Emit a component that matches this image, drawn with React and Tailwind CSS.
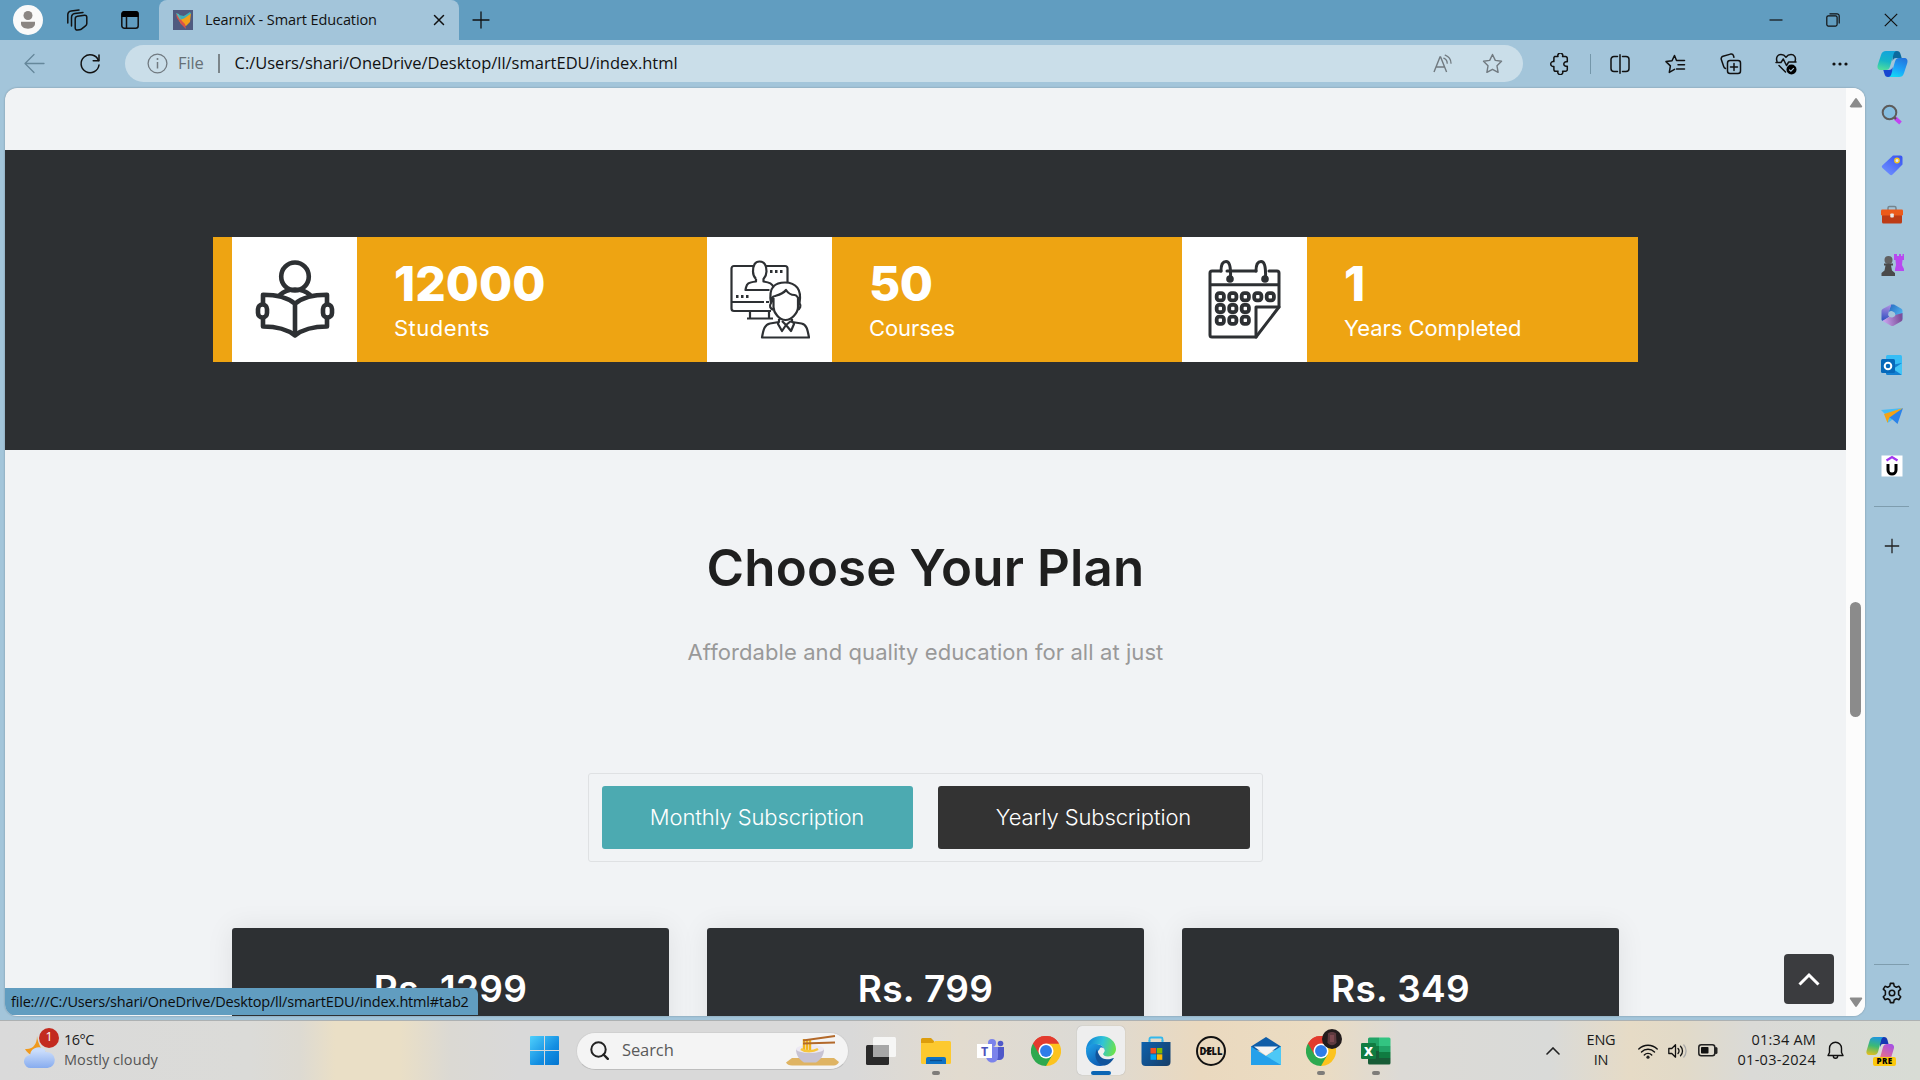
import React from "react";

const UI = "font-['Open_Sans','Noto_Sans',sans-serif]";

function Svg({ w = 24, h, vb, children, className = "" }) {
  return (
    <svg width={w} height={h || w} viewBox={vb || `0 0 ${w} ${h || w}`} fill="none" className={`block shrink-0 ${className}`}>
      {children}
    </svg>
  );
}

const line = { stroke: "#111", strokeWidth: 1.5, strokeLinecap: "round", strokeLinejoin: "round" };

/* ---------- title bar ---------- */

function TitleBar() {
  return (
    <div className="flex h-10 items-center bg-[#619dc0]">
      <div className="flex w-[159px] items-center pl-[13px]">
        <Svg w={30}>
          <circle cx="15" cy="15" r="15" fill="#fafafa" />
          <circle cx="15" cy="10.500" r="4.500" fill="#8b8683" />
          <path d="M8 16.800h14v1.700c0 3.300-3 5.200-7 5.200s-7-1.900-7-5.200z" fill="#8b8683" />
        </Svg>
        <Svg w={22} className="ml-[23px]">
          <g {...line} strokeWidth="1.500">
            <path d="M11.500 7.300l7-1.100c1.300-.2 2.300.6 2.300 1.900v6.400c0 1-.5 1.800-1.300 2.300l-3.800 3c-.6.500-1.400.8-2.200.9l-2 .3c-1.300.2-2.300-.6-2.300-1.900V10c0-1.400 1-2.500 2.300-2.700z" />
            <path d="M5.500 17V8.500a4 4 0 0 1 3.400-3.900L17 3.400" />
            <path d="M1.800 14V5.800A4 4 0 0 1 5.200 1.900L13 1" />
          </g>
        </Svg>
        <Svg w={20} className="ml-[32px]">
          <rect x="1.800" y="1.800" width="16.400" height="16.400" rx="2.500" {...line} />
          <path d="M1.500 4a3 3 0 0 1 3-3h11a3 3 0 0 1 3 3v3h-17z" fill="#000" />
          <path d="M6.500 7v11" {...line} />
        </Svg>
      </div>
      <div className="flex h-full w-[300px] items-center rounded-t-[8px] bg-[#a3c5da] pl-[14px]">
        <Svg w={20}>
          <rect width="20" height="20" fill="#4f5a80" />
          <path d="M5 8l6-2 7-3-1 9-4 4-5-2z" fill="#f2a01b" />
          <path d="M6 5l5 1 6-4 1 1.500-7 5-3 1z" fill="#3fb0b8" />
          <path d="M3 4l3 2 3 5 3 3 1 5-4-4-5-7z" fill="#d9534a" />
          <path d="M3 3l3 1 2 5-1 1z" fill="#55b8b4" />
        </Svg>
        <span className={`${UI} ml-3 w-[220px] whitespace-nowrap text-[14.500px] leading-5 tracking-[-0.1px] text-[#111]`}>
          LearniX - Smart Education
        </span>
        <Svg w={12} className="ml-2">
          <path d="M1.500 1.500l9 9M10.500 1.500l-9 9" {...line} />
        </Svg>
      </div>
      <Svg w={18} className="ml-[13px]">
        <path d="M9 1v16M1 9h16" {...line} strokeWidth="1.300" />
      </Svg>
      <div className="ml-auto flex items-center pr-[22px]">
        <Svg w={14}>
          <path d="M.5 7h13" stroke="#111" strokeWidth="1.200" />
        </Svg>
        <Svg w={14} className="ml-[43px]">
          <rect x=".8" y="2.800" width="10.300" height="10.300" rx="1.500" stroke="#111" strokeWidth="1.200" />
          <path d="M3.500 .8H11A2.200 2.200 0 0 1 13.200 3v7.500" stroke="#111" strokeWidth="1.200" />
        </Svg>
        <Svg w={14} className="ml-[44px]">
          <path d="M.8.8l12.400 12.400M13.200.8L.8 13.200" stroke="#111" strokeWidth="1.200" />
        </Svg>
      </div>
    </div>
  );
}

/* ---------- address bar ---------- */

function Toolbar() {
  return (
    <div className="flex h-12 items-center pb-px">
      <Svg w={21} className="ml-[24px]">
        <path d="M20 10.500H1.500M10 1.500l-9 9 9 9" stroke="#65889b" strokeWidth="1.300" strokeLinejoin="round" strokeLinecap="round" />
      </Svg>
      <Svg w={22} className="ml-[34px]">
        <path d="M19.500 7.500A9 9 0 1 0 20 12" {...line} />
        <path d="M20 2v5.800h-5.800" {...line} />
      </Svg>
      <div className="ml-[24px] flex h-[37px] w-[1398px] items-center rounded-full bg-[#cadee9] pl-[22px]">
        <Svg w={21}>
          <circle cx="10.500" cy="10.500" r="9.400" stroke="#717a80" strokeWidth="1.300" />
          <path d="M10.500 9v6.500" stroke="#717a80" strokeWidth="1.500" />
          <circle cx="10.500" cy="6" r="1" fill="#717a80" />
        </Svg>
        <span className={`${UI} ml-[10px] w-[40px] text-[16.500px] tracking-[-0.1px] text-[#667076]`}>File</span>
        <span className="h-[19px] w-[1.500px] bg-[#7b858a]" />
        <span className={`${UI} ml-[15px] whitespace-nowrap text-[16.500px] tracking-[-0.010px] text-[#111]`}>
          C:/Users/shari/OneDrive/Desktop/ll/smartEDU/index.html
        </span>
        <div className="ml-auto flex items-center pr-[20px]">
          <Svg w={20}>
            <path d="M1 18L7 3h.6l6 15M3 13h8.600" stroke="#717a80" strokeWidth="1.400" />
            <path d="M10.800 4.200a5.500 5.500 0 0 1 3.400 5M12.200 1.200a9 9 0 0 1 5.800 8" stroke="#717a80" strokeWidth="1.300" strokeLinecap="round" />
          </Svg>
          <Svg w={21} className="ml-[29px]">
            <path d="M10.500 1.500l2.800 5.900 6.200.9-4.500 4.500 1.100 6.500-5.600-3-5.600 3L6 12.800 1.500 8.300l6.200-.9z" stroke="#717a80" strokeWidth="1.400" strokeLinejoin="round" />
          </Svg>
        </div>
      </div>
      <div className="flex items-center">
        <Svg w={22} className="ml-[26px]">
          <path d="M5 4h3.500a2.500 2.500 0 1 1 4.600 0H16a1.800 1.800 0 0 1 1.800 1.800v3.400h-1.300a2.200 2.200 0 1 0 0 4.400h1.300v3.200A1.800 1.800 0 0 1 16 18.600h-2.900a2.500 2.500 0 1 1-4.600 0H6.200a1.800 1.800 0 0 1-1.800-1.800v-3a2.500 2.500 0 1 1 0-4.800V5z" {...line} transform="translate(.5 -.4)" />
        </Svg>
        <span className="ml-[19px] h-5 w-px bg-[#7497aa]" />
        <Svg w={20} className="ml-[19px]">
          <path d="M7.500 2.500H4a3 3 0 0 0-3 3v9a3 3 0 0 0 3 3h3.500M12.500 2.500H16a3 3 0 0 1 3 3v9a3 3 0 0 1-3 3h-3.500M10 .8v18.400" {...line} />
        </Svg>
        <Svg w={21} h={20} className="ml-[35px]">
          <path d="M11.500 6.500L9.500 1.500 7 6.800 1 7.600l4.400 4.300-1.100 6.500 5.200-3M11.500 6.500h8M13 10.800h6.500M11.500 15h8" {...line} />
        </Svg>
        <Svg w={22} className="ml-[34px]">
          <rect x="7.500" y="7.500" width="13" height="13" rx="2.500" {...line} />
          <path d="M14 10.500v7M10.500 14h7M5.500 15.500C4.500 15 4 14.500 3.700 13.500L1.300 6.500A2.500 2.500 0 0 1 3 3.300l7.500-2.200a2.500 2.500 0 0 1 3 1.700l.4 1.400" {...line} />
        </Svg>
        <Svg w={22} className="ml-[33px]">
          <path d="M2 8.500C.5 4 3 1.500 6 1.500c2.200 0 3.800 1 5 2.700 1.200-1.700 2.800-2.700 5-2.700 3 0 5.500 2.500 4 7M1 9.500h5l2.300-3.500 3.200 6.500 2.200-3.500H21M4 12.500l6.500 6.500" {...line} />
          <circle cx="16.500" cy="16.500" r="5" fill="#000" />
          <path d="M14.200 16.600l1.700 1.600 2.900-3" stroke="#a3c5da" strokeWidth="1.200" />
        </Svg>
        <Svg w={18} h={6} className="ml-[34px]">
          <circle cx="3" cy="3" r="1.600" fill="#111" />
          <circle cx="9" cy="3" r="1.600" fill="#111" />
          <circle cx="15" cy="3" r="1.600" fill="#111" />
        </Svg>
      </div>
      <Svg w={31} h={28} className="ml-[28px]">
        <Copilot />
      </Svg>
    </div>
  );
}

function Copilot() {
  return (
    <>
      <defs>
        <linearGradient id="cpA" x1="8" y1="1" x2="4" y2="20" gradientUnits="userSpaceOnUse">
          <stop stopColor="#12a5da" /><stop offset=".5" stopColor="#16b5c8" /><stop offset="1" stopColor="#52e09a" />
        </linearGradient>
        <linearGradient id="cpB" x1="26" y1="8" x2="18" y2="27" gradientUnits="userSpaceOnUse">
          <stop stopColor="#2274dc" /><stop offset=".6" stopColor="#1ba5fa" /><stop offset="1" stopColor="#13d7f4" />
        </linearGradient>
      </defs>
      <path d="M15 1h5c2 0 3 1 3.500 3l1.200 4h-5.500c-2 0-3 1-3.500 3z" fill="#0b6a9e" />
      <path d="M16 27h-5c-2 0-3-1-3.500-3l-1.200-4H12c2 0 3-1 3.500-3z" fill="#1746d0" />
      <path d="M9 1h11c-2 0-3 1.500-3.500 3.500l-3.500 12C12.300 19 11 20 9 20H4c-3 0-4-2-3.300-5L4 5C5 2 6.500 1 9 1z" fill="url(#cpA)" />
      <path d="M22 27H11c2 0 3-1.500 3.500-3.500l3.500-12C18.700 9 20 8 22 8h5c3 0 4 2 3.300 5L27 23c-1 3-2.500 4-5 4z" fill="url(#cpB)" />
    </>
  );
}

/* ---------- side rail ---------- */

function SideRail() {
  return (
    <div className="flex w-[55px] flex-col items-center pr-[2px] pt-[16px]">
      <div className="flex flex-col items-center gap-[28.100px]">
        <Svg w={22}>
          <path d="M14 14l5.500 5" stroke="#c243f2" strokeWidth="3.800" />
          <path d="M12 12l3 3" stroke="#5b4a50" strokeWidth="2" />
          <circle cx="8.500" cy="8.500" r="6.800" fill="#86bee0" stroke="#5d5b5a" strokeWidth="2" />
        </Svg>
        <Svg w={22}>
          <defs><linearGradient id="tag" x1="18" y1="2" x2="5" y2="20" gradientUnits="userSpaceOnUse"><stop stopColor="#3b57f2" /><stop offset="1" stopColor="#6c8dff" /></linearGradient></defs>
          <path d="M12 1.500h7.500a2 2 0 0 1 2 2v7L11.500 20.500c-1 1-1.800 1-2.800 0L1.500 14c-1-1-1-1.800 0-2.800z" fill="url(#tag)" />
          <circle cx="16" cy="6.500" r="2.200" fill="#dbe5ff" stroke="#f6c51b" strokeWidth="1.400" />
        </Svg>
        <Svg w={24} h={22}>
          <path d="M8 6V4a1.500 1.500 0 0 1 1.500-1.500h5A1.500 1.500 0 0 1 16 4v2" stroke="#74858e" strokeWidth="1.500" />
          <rect x="2" y="10" width="20" height="9.500" rx="1.500" fill="#bd3c16" />
          <rect x="1" y="5.500" width="22" height="6" rx="1.200" fill="#ec5a1a" />
          <rect x="10.300" y="9.500" width="3.500" height="4" rx=".8" fill="#e9e9e9" />
        </Svg>
        <Svg w={24} h={22}>
          <path d="M15 0h2v2h2V0h2v2h1.500V0H24v6h-1.500l-.5 5 2 4v2h-9v-2l1-4-.5-5H14V0z" fill="#b848f0" />
          <circle cx="8.500" cy="6" r="4" fill="#616161" />
          <path d="M4 9.500h9v2h-2l1 5 3 2.500v3H1.500v-3l3-2.500 1-5H4z" fill="#4a4a4a" />
        </Svg>
        <Svg w={22}>
          <defs>
            <linearGradient id="m1" x1="8" y1="3" x2="21" y2="12" gradientUnits="userSpaceOnUse"><stop stopColor="#2c6fc4" /><stop offset="1" stopColor="#50b9f2" /></linearGradient>
            <linearGradient id="m2" x1="4" y1="1" x2="2" y2="15" gradientUnits="userSpaceOnUse"><stop stopColor="#a98be0" /><stop offset="1" stopColor="#3a55c4" /></linearGradient>
            <linearGradient id="m3" x1="3" y1="19" x2="20" y2="16" gradientUnits="userSpaceOnUse"><stop stopColor="#c9a3ee" /><stop offset="1" stopColor="#7d4f9c" /></linearGradient>
          </defs>
          <path fillRule="evenodd" d="M10 .5h3l7 4c1 .6 1.500 1.300 1.500 2.500V15l-7-4a4 4 0 0 0-7-2.500z" fill="url(#m1)" />
          <path d="M10.500.3L2 4.800C1 5.400.5 6 .5 7.200V15c0 1 .3 1.500 1 2l6.700-4.200A4 4 0 0 1 7.500 8.500z" fill="url(#m2)" />
          <path d="M1.500 17l7-4.200a4 4 0 0 0 6-1.800l7-2v6c0 1.200-.5 1.800-1.500 2.400l-7 4c-1.200.7-2.200.7-3.400 0z" fill="url(#m3)" />
        </Svg>
        <Svg w={22}>
          <rect x="5" y="1" width="16" height="13" rx="1.500" fill="#36bdf6" />
          <path d="M5 12l16-3v10.500a1.500 1.500 0 0 1-1.500 1.500h-13A1.500 1.500 0 0 1 5 19.500z" fill="#127fd1" />
          <path d="M21 9v12l-9-6z" fill="#42c5f7" />
          <rect x="0" y="5" width="14" height="14" rx="1.500" fill="#0669ba" />
          <circle cx="7" cy="12" r="3.300" stroke="#fff" strokeWidth="2" />
        </Svg>
        <Svg w={22}>
          <path d="M0 5l22-2-12 4.500-6 1.500z" fill="#47bcf5" />
          <path d="M22 3L7 12l1.500 3.500 3-1 5 4.500z" fill="#2b83e9" />
          <path d="M22 3L3 9l3.500 9 2-5.500z" fill="#f5a313" />
          <path d="M6.500 18l2-5.500 3 2z" fill="#49bdf0" />
        </Svg>
        <Svg w={22}>
          <rect x=".5" y=".5" width="21" height="21" fill="#fff" />
          <path d="M5.500 5.500L11 2l5.500 3.500" stroke="#a336f0" strokeWidth="2.300" />
          <path d="M7 9v6a4 4 0 0 0 8 0V9" stroke="#000" strokeWidth="3" />
        </Svg>
      </div>
      <span className="mt-[29px] h-px w-[35px] bg-[#7e9dae]" />
      <Svg w={16} className="mt-[31px]">
        <path d="M8 .8v14.400M.8 8h14.400" stroke="#222" strokeWidth="1.300" />
      </Svg>
      <span className="mt-auto h-px w-[35px] bg-[#7e9dae]" />
      <Svg w={22} vb="0 0 24 24" className="mb-[12px] mt-[17px]">
        <path d="M10.200 1.500h3.600l.6 3 2.300 1.200 2.900-1 1.900 3.100-2.300 2.200v3.900l2.300 2.200-1.900 3.200-2.900-1-2.300 1.300-.6 2.900h-3.600l-.6-2.900-2.300-1.300-2.900 1-1.900-3.200 2.300-2.200V10L2.500 7.800l1.900-3.100 2.900 1 2.300-1.200z" {...line} strokeWidth="1.700" />
        <circle cx="12" cy="12" r="3" {...line} strokeWidth="1.700" />
      </Svg>
    </div>
  );
}

/* ---------- page ---------- */

function ReaderIcon() {
  return (
    <Svg w={80}>
      <g stroke="#2d3033" strokeWidth="4.600" strokeLinejoin="round" strokeLinecap="round">
        <ellipse cx="40" cy="16.500" rx="13.800" ry="14" />
        <path d="M25 35c4-4 8-5.500 15-5.500S51 31 55 35" />
        <path d="M8 43v-8.200c12 0 24 2.200 32 9 8-6.800 20-9 32-9V43M8 59v7.500c12 0 24 2.500 32 9 8-6.500 20-9 32-9V59M40 44v31" />
        <rect x="3" y="44.500" width="9" height="13" rx="4.500" />
        <rect x="68" y="44.500" width="9" height="13" rx="4.500" />
      </g>
    </Svg>
  );
}

function TutorIcon() {
  return (
    <Svg w={80}>
      <g stroke="#2d3033" strokeWidth="2.200" strokeLinejoin="round">
        <path d="M23 6H4a2.500 2.500 0 0 0-2.500 2.500v40A2.500 2.500 0 0 0 4 51h37M36 6h19a2.500 2.500 0 0 1 2.500 2.500V22M2 42h32M36 42h3" />
        <path d="M20 51v7M39 51v7M17 58.500h26" />
        <path d="M26 19c-2-2-3-4-3-7.500C23 5 25 1.500 29.500 1.500S36.500 5 36.500 11.500c0 3.500-1.300 5.500-3 7.500v2.500c6 1 9 2 10 6M26 19v2.500c-8 1-9 2-10 6L15.500 30h24" />
        <path d="M41 43c-3-17 5-20.500 14-20.500 11 0 17 7 14.500 20.500-1-5-2-8-5-8-4 0-6.500-2-8.500-5-3 4-7.500 5-11 6-3 0-3.500 3-4 7zM43.500 38v9c0 6 6 13 12 13S68 53 68 47V37M41 43c-2 3-1 6 3 7M69.500 43c2 3 .5 6-2 7" />
        <path d="M49 59v3l-9 1.500c-5 1-6.500 5-8 14h47C77.500 69 76.500 64.500 71.500 63.500L62 62v-3M49 61l-1 3 4 7 4-6 5 6 3-7-2-3M56 65l-4-4M56 65l5-4" />
      </g>
      <g fill="#2d3033">
        <path d="M40 10h2.500v3H40zM45 10h2.500v3H45zM50 10h2.500v3H50zM6 35h2.500v3H6zM11 35h2.500v3H11zM16 35h2.500v3H16z" />
      </g>
    </Svg>
  );
}

const days = [[0, 0], [1, 0], [2, 0], [3, 0], [4, 0], [0, 1], [1, 1], [2, 1], [0, 2], [1, 2], [2, 2]];

function CalendarIcon() {
  return (
    <Svg w={80}>
      <g stroke="#2d3033" strokeWidth="3" strokeLinejoin="round" strokeLinecap="round">
        <path d="M16 11H7a2 2 0 0 0-2 2v62a2 2 0 0 0 2 2h44l23-30V13a2 2 0 0 0-2-2h-8M22 11h29M28 11h16M5 24.800h69" />
        <path d="M51 77V47h23" />
        <path d="M16 11C16 4 18 1.500 21 1.500S26 5 25.500 18M51 11c0-7 2-9.500 5-9.500s5 3.500 4.500 16.500" />
        {days.map(([c, r]) => (
          <rect key={`${c}-${r}`} x={11.700 + c * 12.500} y={33.200 + r * 11.700} width="7.200" height="7.200" rx="2.600" strokeWidth="3.800" />
        ))}
      </g>
      <circle cx="25" cy="19" r="3.800" fill="#2d3033" />
      <circle cx="60" cy="19" r="3.800" fill="#2d3033" />
    </Svg>
  );
}

const stats = [
  { icon: <ReaderIcon />, value: "12000", label: "Students", vt: "tracking-[0px]", lt: "tracking-[0.5px]" },
  { icon: <TutorIcon />, value: "50", label: "Courses", vt: "tracking-[-0.6px]", lt: "tracking-[-0.1px]" },
  { icon: <CalendarIcon />, value: "1", label: "Years Completed", vt: "", lt: "tracking-[-0.050px]" },
];

function Stats() {
  return (
    <section className="flex h-[300px] items-center justify-center bg-[#2d3033] pb-[1px]">
      <div className="flex w-[1425px] bg-[#eea412] pl-[19px]">
        {stats.map((s) => (
          <div key={s.label} className="flex h-[125px] w-[475px] shrink-0 items-center last:w-[456px]">
            <div className="flex h-full w-[125px] items-center justify-center bg-white">{s.icon}</div>
            <div className="ml-[37px] pt-[2px] text-white">
              <div className={`text-[48px] font-extrabold leading-[52px] ${s.vt}`}>{s.value}</div>
              <div className={`mt-[3px] whitespace-nowrap text-[22px] leading-[30px] ${s.lt}`}>{s.label}</div>
            </div>
          </div>
        ))}
      </div>
    </section>
  );
}

function Plans() {
  return (
    <section className="flex flex-col items-center">
      <h2 className="mt-[86px] whitespace-nowrap text-[51px] font-semibold leading-[64px] tracking-[0.150px] text-[#1f1f1f]">
        Choose Your Plan
      </h2>
      <p className="mt-[37px] whitespace-nowrap text-[22px] leading-[30px] tracking-[0.080px] text-[#999999]">
        Affordable and quality education for all at just
      </p>
      <div className="mt-[106px] flex h-[89px] w-[675px] items-center justify-between rounded-[3px] border border-[#dfe1e3] px-[12.500px]">
        <div className="flex h-[63px] w-[311px] items-center justify-center whitespace-nowrap rounded-[3px] bg-[#4caab1] text-[22px] font-light tracking-[-0.130px] text-white">
          Monthly Subscription
        </div>
        <div className="flex h-[63px] w-[312px] items-center justify-center whitespace-nowrap rounded-[3px] bg-[#333333] text-[22px] font-light tracking-[-0.130px] text-white">
          Yearly Subscription
        </div>
      </div>
      <div className="mt-[66px] flex gap-[38px]">
        {["Rs. 1299", "Rs. 799", "Rs. 349"].map((p) => (
          <div key={p} className="flex h-[120px] w-[437px] justify-center rounded-[3px] bg-[#2d3033] pt-[37px] shadow-[0_0_28px_rgba(0,0,0,0.08)]">
            <span className="whitespace-nowrap text-[37px] font-semibold leading-[48px] tracking-[0.350px] text-white">{p}</span>
          </div>
        ))}
      </div>
    </section>
  );
}

function Viewport() {
  return (
    <div className="relative ml-[5px] flex w-[1860px] overflow-hidden rounded-[12px] bg-[#f1f3f5] shadow-[0_0_2px_rgba(0,0,0,0.3)]">
      <main className="h-full w-[1841px] overflow-hidden pt-[62px] font-[Inter,sans-serif]">
        <Stats />
        <Plans />
      </main>
      <div className="flex w-[19px] flex-col items-center bg-[#fcfcfc] pt-[10px]">
        <Svg w={14} h={10}>
          <path d="M6 .8a1.200 1.200 0 0 1 2 0l5 7.200c.5.700 0 1.500-.8 1.500H1.800C1 9.500.5 8.700 1 8z" fill="#8b8b8b" />
        </Svg>
        <span className="mt-[494px] h-[115px] w-[11px] rounded-full bg-[#8b8b8b]" />
        <Svg w={14} h={10} className="mb-[9px] mt-auto rotate-180">
          <path d="M6 .8a1.200 1.200 0 0 1 2 0l5 7.200c.5.700 0 1.500-.8 1.500H1.800C1 9.500.5 8.700 1 8z" fill="#8b8b8b" />
        </Svg>
      </div>
      <div className="absolute bottom-[12px] right-[31px] flex h-[50px] w-[50px] items-center justify-center rounded-[4px] bg-[#3b3c3f]">
        <Svg w={22} h={14}>
          <path d="M1.500 12.500L11 3 20.500 12.500" stroke="#fff" strokeWidth="3" />
        </Svg>
      </div>
      <div className={`${UI} absolute bottom-px left-0 flex h-[27px] w-[473px] items-center whitespace-nowrap rounded-tr-[6px] bg-[#619dc0] pl-[6px] text-[14.500px] tracking-[-0.180px] text-[#0c0c0c]`}>
        file:///C:/Users/shari/OneDrive/Desktop/ll/smartEDU/index.html#tab2
      </div>
    </div>
  );
}

/* ---------- taskbar ---------- */

function Chrome() {
  return (
    <Svg w={30} vb="0 0 48 48">
      <path d="M24 24L3.200 12A24 24 0 0 1 44.800 12z" fill="#e33b2e" />
      <path d="M24 24V12h20.800A24 24 0 0 1 24 48z" fill="#fcc31e" />
      <path d="M24 24l10.400 6L24 48A24 24 0 0 1 3.200 12z" fill="#2da94f" />
      <path d="M24 12h20.800A24 24 0 0 0 3.200 12l10.400 18z" fill="#e33b2e" />
      <circle cx="24" cy="24" r="12" fill="#fff" />
      <circle cx="24" cy="24" r="9.500" fill="#2f7de9" />
    </Svg>
  );
}

function Edge() {
  return (
    <Svg w={30}>
      <defs>
        <linearGradient id="eg" x1="2" y1="6" x2="29" y2="14" gradientUnits="userSpaceOnUse">
          <stop stopColor="#1488d8" /><stop offset=".5" stopColor="#2fc3d8" /><stop offset="1" stopColor="#6be24c" />
        </linearGradient>
        <linearGradient id="eb" x1="0" y1="10" x2="14" y2="30" gradientUnits="userSpaceOnUse">
          <stop stopColor="#1fa0e6" /><stop offset="1" stopColor="#0c59b0" />
        </linearGradient>
      </defs>
      <path d="M0 13C1 5 7 0 15 0c9 0 15 6 15 13 0 4.500-3.500 7.500-8 7.500-3.500 0-5-1.500-5-2.500s1.500-1.500 1.500-4c0-3-3-5.500-7-5.500C6 8.500 1 11 0 15z" fill="url(#eg)" />
      <path d="M0 15C0 10 5 7.500 10 8c5 .4 8.500 3 8.500 6-6-2.500-8 2-6.500 6 1.500 5 6 8 11 6-3 3-6 4-9 4C6 30 0 23 0 15z" fill="url(#eb)" />
      <path d="M11 13c-4 7 0 16 8 16.500 4-1 7-4 9-7.500-1-.5-3 1.300-7 1.300-6 0-9-5-10-10.300z" fill="#11549b" />
      <path d="M14 12c2.500-1 4.500 0 4.500 2.500 0 2-1.500 2.500-1.500 3.500s1 2 3 2.300c-5 1-8-5-6-8.300z" fill="#f0f0f0" />
    </Svg>
  );
}

function AppSlot({ children, active, running }) {
  return (
    <div className="flex w-[55px] justify-center">
      <div className={`relative flex h-[49px] w-[48px] items-center justify-center rounded-[5px] ${active ? "bg-[#eeeeee] shadow-[0_0_1px_rgba(0,0,0,0.3)]" : ""}`}>
        {children}
        {active && <span className="absolute bottom-0 h-[4px] w-[20px] rounded-full bg-[#0b66b4]" />}
        {running && <span className="absolute bottom-0 h-[4px] w-[8px] rounded-full bg-[#7e7c79]" />}
      </div>
    </div>
  );
}

function Taskbar() {
  return (
    <div className={`${UI} flex h-[60px] items-center border-t border-[#adb1b2] bg-[linear-gradient(90deg,#dadada_0px,#dbdbd8_250px,#dddad2_300px,#eadfc6_335px,#eadfc6_400px,#dbd9d3_450px,#d9d9d9_520px,#d9d9d9_850px,#e2dbcf_960px,#dcdad5_1080px,#ead9bf_1200px,#ebdcc2_1320px,#dcdad6_1400px,#d9dad8_1550px,#e6dbc6_1630px,#e2dac8_1680px,#dadad7_1750px,#d8dcd5_1920px)] text-[#1b1b1b]`}>
      <div className="flex w-[530px] items-center pl-[24px]">
        <div className="relative">
          <Svg w={34} h={36}>
            <defs><linearGradient id="cl" x1="0" y1="18" x2="0" y2="36" gradientUnits="userSpaceOnUse"><stop stopColor="#c9dcfb" /><stop offset="1" stopColor="#83a9ee" /></linearGradient></defs>
            <path d="M13 3c1 8 4 14 11 17-5 7-19 4-23-4C9 17 13 11 13 3z" fill="#f09a1e" />
            <path d="M7 35a6.500 6.500 0 0 1-1-13A8.500 8.500 0 0 1 22 19a7.500 7.500 0 0 1 1.500 16z" fill="url(#cl)" />
          </Svg>
          <span className="absolute -top-[5px] left-[15px] flex h-5 w-5 items-center justify-center rounded-full bg-[#c32a1f] text-[12.500px] leading-none text-white">1</span>
        </div>
        <div className="ml-[6px] whitespace-nowrap pb-[2px] text-[14.500px] leading-[20px] tracking-[-0.500px]">
          <div>16°C</div>
          <div className="tracking-[0.080px] text-[#555]">Mostly cloudy</div>
        </div>
      </div>
      <Svg w={29}>
        <defs><linearGradient id="wn" x1="0" y1="0" x2="29" y2="29" gradientUnits="userSpaceOnUse"><stop stopColor="#4fd0fc" /><stop offset=".6" stopColor="#138ee2" /><stop offset="1" stopColor="#0475d0" /></linearGradient></defs>
        <path d="M0 1a1 1 0 0 1 1-1h13v14H0zM15 0h13a1 1 0 0 1 1 1v13H15zM0 15h14v14H1a1 1 0 0 1-1-1zM15 15h14v13a1 1 0 0 1-1 1H15z" fill="url(#wn)" />
      </Svg>
      <div className="ml-[17px] mr-[4px] flex h-[38px] w-[273px] items-center rounded-full border border-[#d0d0d0] border-b-[#bdbdbd] bg-[#f4f4f4] pl-[13px]">
        <Svg w={19}>
          <circle cx="8.500" cy="8.500" r="7.200" stroke="#222" strokeWidth="2" />
          <path d="M13.500 13.500l4.300 4.300" stroke="#222" strokeWidth="2.400" strokeLinecap="round" />
        </Svg>
        <span className="ml-[13px] text-[16.500px] tracking-[-0.100px] text-[#5a5a5a]">Search</span>
        <Svg w={54} h={32} className="ml-auto mr-[8px]">
          <path d="M6 23h42l5 4c-1 2-3 3.500-5 3.500H6c-3 0-5-1-6-3z" fill="#dfb463" />
          <path d="M10 14h28c0 7-4 11-8 13.500H18C14 25 10 21 10 14z" fill="#c7c3d3" />
          <ellipse cx="24" cy="14" rx="14" ry="4" fill="#ece9f3" />
          <path d="M18 4v11M21 4v12M24 4v11" stroke="#f3b61c" strokeWidth="2.400" />
          <path d="M15 14c4 3 12 3 17 0" stroke="#f6c63d" strokeWidth="2.500" />
          <path d="M17 5.500L49 1M17 8.500l32-1" stroke="#b3692a" strokeWidth="1.800" />
        </Svg>
      </div>
      <div className="flex">
        <AppSlot>
          <Svg w={30} h={30}>
            <rect x="0" y="9" width="23" height="20" rx="1.500" fill="#2a2a2a" />
            <rect x="7" y="1" width="23" height="20" rx="1.500" fill="#fafafa" opacity=".85" />
            <rect x="7" y="9" width="16" height="12" fill="#a7a7a7" />
          </Svg>
        </AppSlot>
        <AppSlot running>
          <Svg w={30} h={28}>
            <path d="M0 2.500A1.500 1.500 0 0 1 1.500 1H10l3 3v6H0z" fill="#dd9d0c" />
            <path d="M0 6h12l2-2h14.500A1.500 1.500 0 0 1 30 5.500v20a1.500 1.500 0 0 1-1.500 1.500h-27A1.500 1.500 0 0 1 0 25.500z" fill="#fdc92f" />
            <path d="M5 27v-5a2 2 0 0 1 2-2h16a2 2 0 0 1 2 2v5z" fill="#0f72c5" />
            <path d="M9 23.500h12" stroke="#0a4b8c" strokeWidth="1.300" />
          </Svg>
        </AppSlot>
        <AppSlot>
          <Svg w={28} h={26}>
            <circle cx="15" cy="5" r="4" fill="#7b83eb" />
            <circle cx="23.500" cy="5.500" r="2.800" fill="#5059c9" />
            <path d="M18 9h9v8c0 4-3 5.500-6 5H18z" fill="#5059c9" />
            <path d="M9 9h12v9c0 5-3 6.500-6 6.500S9 22 9 18z" fill="#7b83eb" />
            <rect x="0" y="6" width="15" height="14" fill="#fff" />
            <text x="7.500" y="17.500" fontSize="12.500" fontWeight="700" fill="#4b53bc" textAnchor="middle">T</text>
          </Svg>
        </AppSlot>
        <AppSlot><Chrome /></AppSlot>
        <AppSlot active><Edge /></AppSlot>
        <AppSlot>
          <Svg w={30}>
            <defs><linearGradient id="st" x1="0" y1="6" x2="30" y2="30" gradientUnits="userSpaceOnUse"><stop stopColor="#0d62ae" /><stop offset="1" stopColor="#173d66" /></linearGradient></defs>
            <path d="M8.500 8V3A1.500 1.500 0 0 1 10 1.500h10A1.500 1.500 0 0 1 21.500 3v5" stroke="#33b8ec" strokeWidth="1.800" />
            <path d="M.5 6h29v20a4 4 0 0 1-4 4h-21a4 4 0 0 1-4-4z" fill="url(#st)" />
            <path d="M8.500 5.500V4M21.500 5.500V4" stroke="#33b8ec" strokeWidth="1.800" />
            <path d="M9.500 12H15v5.500H9.500z" fill="#f25022" /><path d="M15.800 12h5.500v5.500h-5.500z" fill="#7fba00" />
            <path d="M9.500 18.300H15v5.500H9.500z" fill="#00a4ef" /><path d="M15.800 18.300h5.500v5.500h-5.500z" fill="#ffb900" />
          </Svg>
        </AppSlot>
        <AppSlot>
          <Svg w={30}>
            <circle cx="15" cy="15" r="14" stroke="#111" strokeWidth="2" />
            <text x="3.500" y="18.800" fontSize="10.500" fontWeight="800" fill="#111" textLength="23" lengthAdjust="spacingAndGlyphs">DELL</text>
            <path d="M9.500 15.500l5-3.300M11 17.500l5-3.300" stroke="#111" strokeWidth="1.100" />
          </Svg>
        </AppSlot>
        <AppSlot>
          <Svg w={30} h={28}>
            <path d="M0 9.500L15 0l15 9.500v4H0z" fill="#0f5da8" />
            <path d="M0 9.500L15 19l15-9.500V28H0z" fill="#24a0ea" />
            <path d="M30 9.500V28L15 19z" fill="#4dc8f6" />
            <path d="M3 9.500h24l-12 9z" fill="#f4f4f4" />
          </Svg>
        </AppSlot>
        <AppSlot running>
          <Chrome />
          <Svg w={20} className="absolute right-[3px] top-[3px]">
            <circle cx="10" cy="10" r="10" fill="#231c1d" />
            <path d="M6 4.500C7.500 2.500 12.500 2.500 14 4.500l.5 9c-2 3.500-7 3.500-9 0z" fill="#5e3a3f" />
            <path d="M8 6h4v7H8z" fill="#7d4950" />
          </Svg>
        </AppSlot>
        <AppSlot running>
          <Svg w={30} h={28}>
            <path d="M7 2a1.500 1.500 0 0 1 1.500-1.500H18V9H7z" fill="#21a366" /><path d="M18 .5h10A1.500 1.500 0 0 1 29.500 2v7H18z" fill="#33c481" />
            <path d="M7 9h11v6H7z" fill="#107c41" /><path d="M18 9h11.500v6H18z" fill="#21a366" />
            <path d="M7 14h11v13.500H8.500A1.500 1.500 0 0 1 7 26z" fill="#185c37" /><path d="M18 15h11.500v6H18z" fill="#107c41" />
            <path d="M18 21h11.500v5a1.500 1.500 0 0 1-1.500 1.500H18z" fill="#185c37" />
            <rect x="0" y="6" width="15" height="16" rx="1.300" fill="#107c41" />
            <text x="7.500" y="18.500" fontSize="12.500" fontWeight="800" fill="#fff" textAnchor="middle">X</text>
          </Svg>
        </AppSlot>
      </div>
      <div className="ml-auto flex items-center pr-[25px]">
        <Svg w={14} h={8}>
          <path d="M1 7l6-6 6 6" stroke="#222" strokeWidth="1.600" strokeLinecap="round" />
        </Svg>
        <div className="ml-[20px] flex w-[42px] flex-col items-center pb-[2px] text-[14.500px] leading-[20px] tracking-[-0.200px]">
          <span>ENG</span>
          <span>IN</span>
        </div>
        <Svg w={20} h={16} className="ml-[16px]">
          <path d="M.8 6a13 13 0 0 1 18.400 0M3.500 9a9.200 9.200 0 0 1 13 0M6.300 11.900a5.200 5.200 0 0 1 7.400 0" {...line} strokeWidth="1.400" />
          <circle cx="10" cy="14.200" r="1.600" fill="#222" />
        </Svg>
        <Svg w={20} h={16} className="ml-[10px]">
          <path d="M.8 5.500h3L7.500 1.800v12.400L3.800 10.500h-3z" {...line} strokeWidth="1.300" />
          <path d="M10 5.500a3.500 3.500 0 0 1 0 5M12.500 3.300a6.500 6.500 0 0 1 0 9.400" {...line} strokeWidth="1.300" />
          <path d="M15.500 1.500a9.500 9.500 0 0 1 0 13" stroke="#aaa" strokeWidth="1.300" />
        </Svg>
        <Svg w={20} h={13} className="ml-[10px]">
          <rect x=".8" y=".8" width="16" height="11" rx="2.500" stroke="#222" strokeWidth="1.500" />
          <rect x="3" y="3" width="7.500" height="6.600" rx=".8" fill="#111" />
          <path d="M18 4.500v4" stroke="#222" strokeWidth="3" strokeLinecap="round" />
        </Svg>
        <div className="ml-[20px] flex w-[78px] flex-col items-end whitespace-nowrap pb-[2px] text-[14.500px] leading-[20px]">
          <span className="tracking-[0.180px]">01:34 AM</span>
          <span className="tracking-[0.280px]">01-03-2024</span>
        </div>
        <Svg w={17} h={19} className="ml-[11px]">
          <path d="M1 14.500l1.500-3V7.200a6 6 0 0 1 12 0v4.300l1.500 3zM6.300 15a2.200 2.200 0 0 0 4.400 0" {...line} strokeWidth="1.400" />
        </Svg>
        <div className="relative ml-[22px]">
          <Svg w={29} h={30}>
            <defs><linearGradient id="pv" x1="10" y1="0" x2="6" y2="20" gradientUnits="userSpaceOnUse"><stop stopColor="#1c93e8" /><stop offset=".5" stopColor="#3cba74" /><stop offset="1" stopColor="#f0c018" /></linearGradient>
              <linearGradient id="pw" x1="26" y1="8" x2="16" y2="25" gradientUnits="userSpaceOnUse"><stop stopColor="#a34fe8" /><stop offset="1" stopColor="#f4757b" /></linearGradient></defs>
            <path d="M14 1h4c2 0 3 1 3.500 3l1 4H17c-2 0-2 1-3 3z" fill="#1537b3" />
            <path d="M8 1h11c-3 0-3.500 2-4 4l-3 11c-.7 2-2 3-4 3H3c-2 0-3-2-2.500-4l3-10C4.300 2 6 1 8 1z" fill="url(#pv)" />
            <path d="M21 26H10c3 0 3.500-2 4-4l3-11c.7-2 2-3 4-3h4c2 0 3.500 2 3 4l-3 10c-.8 3-2 4-4 4z" fill="url(#pw)" />
          </Svg>
          <span className="absolute bottom-0 left-[7px] flex h-[9px] w-[23px] items-center justify-center rounded-[2px] bg-[#fcc80d] text-[8px] font-extrabold leading-none tracking-[0.4px] text-black">PRE</span>
        </div>
      </div>
    </div>
  );
}

export default function App() {
  return (
    <div className="flex h-[1080px] w-[1920px] flex-col overflow-hidden bg-[#a3c5da]">
      <TitleBar />
      <Toolbar />
      <div className="flex h-[932px]">
        <div className="flex h-[928px]">
          <Viewport />
        </div>
        <div className="flex h-[928px]">
          <SideRail />
        </div>
      </div>
      <Taskbar />
    </div>
  );
}
